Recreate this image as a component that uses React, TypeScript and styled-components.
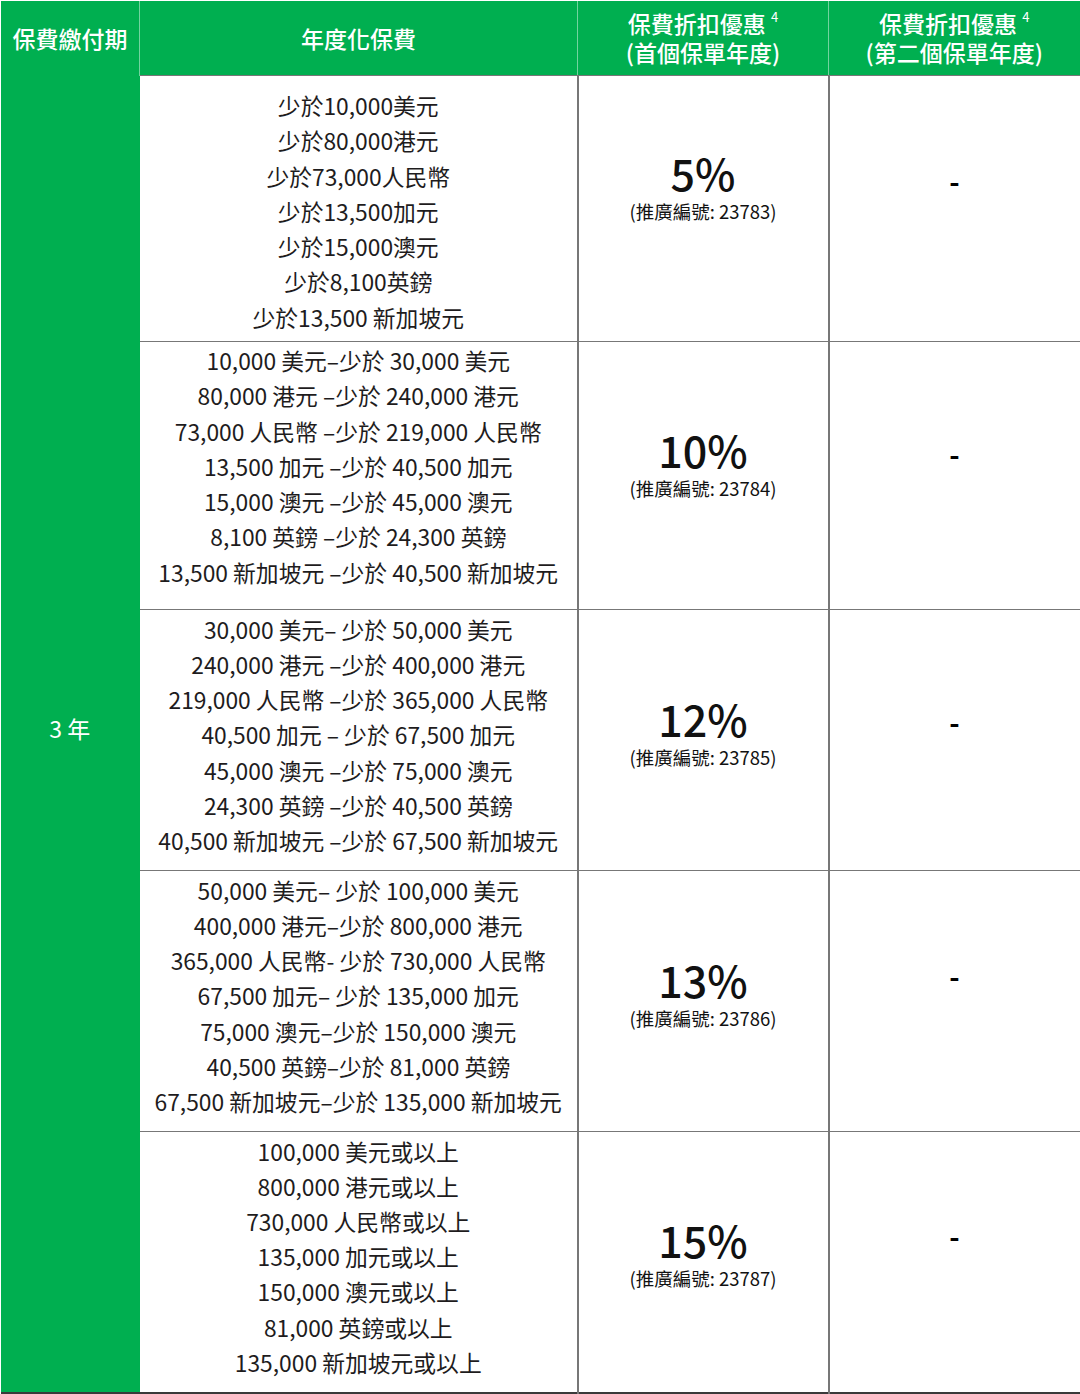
import styled, { createGlobalStyle } from "styled-components"

const GlobalStyle = createGlobalStyle`
  html, body {
    margin: 0;
    padding: 0;
    background: #ffffff;
  }
  body {
    font-family: "Noto Sans CJK TC", "Noto Sans", sans-serif;
    color: #1e1c1d;
  }
`

type Tier = {
  ranges: string[]
  discount: string
  code: string
  height: number
  // vertical nudges (px) to match the source's uneven cell alignment
  rangeShift: number
  discountShift: number
  dashShift: number
}

const tiers: Tier[] = [
  {
    ranges: [
      "少於10,000美元",
      "少於80,000港元",
      "少於73,000人民幣",
      "少於13,500加元",
      "少於15,000澳元",
      "少於8,100英鎊",
      "少於13,500 新加坡元",
    ],
    discount: "5%",
    code: "23783",
    height: 266,
    rangeShift: 3,
    discountShift: -23,
    dashShift: -28,
  },
  {
    ranges: [
      "10,000 美元–少於 30,000 美元",
      "80,000 港元 –少於 240,000 港元",
      "73,000 人民幣 –少於 219,000 人民幣",
      "13,500 加元 –少於 40,500 加元",
      "15,000 澳元 –少於 45,000 澳元",
      "8,100 英鎊 –少於 24,300 英鎊",
      "13,500 新加坡元 –少於 40,500 新加坡元",
    ],
    discount: "10%",
    code: "23784",
    height: 268,
    rangeShift: -9,
    discountShift: -13,
    dashShift: -22,
  },
  {
    ranges: [
      "30,000 美元– 少於 50,000 美元",
      "240,000 港元 –少於 400,000 港元",
      "219,000 人民幣 –少於 365,000 人民幣",
      "40,500 加元 – 少於 67,500 加元",
      "45,000 澳元 –少於 75,000 澳元",
      "24,300 英鎊 –少於 40,500 英鎊",
      "40,500 新加坡元 –少於 67,500 新加坡元",
    ],
    discount: "12%",
    code: "23785",
    height: 261,
    rangeShift: -5,
    discountShift: -9,
    dashShift: -18,
  },
  {
    ranges: [
      "50,000 美元– 少於 100,000 美元",
      "400,000 港元–少於 800,000 港元",
      "365,000 人民幣- 少於 730,000 人民幣",
      "67,500 加元– 少於 135,000 加元",
      "75,000 澳元–少於 150,000 澳元",
      "40,500 英鎊–少於 81,000 英鎊",
      "67,500 新加坡元–少於 135,000 新加坡元",
    ],
    discount: "13%",
    code: "23786",
    height: 261,
    rangeShift: -5,
    discountShift: -9,
    dashShift: -25,
  },
  {
    ranges: [
      "100,000 美元或以上",
      "800,000 港元或以上",
      "730,000 人民幣或以上",
      "135,000 加元或以上",
      "150,000 澳元或以上",
      "81,000 英鎊或以上",
      "135,000 新加坡元或以上",
    ],
    discount: "15%",
    code: "23787",
    height: 261,
    rangeShift: -5,
    discountShift: -9,
    dashShift: -26,
  },
]

export default function App() {
  return (
    <>
      <GlobalStyle />
      <Table>
        <colgroup>
          <col style={{ width: 139 }} />
          <col style={{ width: 438 }} />
          <col style={{ width: 251 }} />
          <col style={{ width: 252 }} />
        </colgroup>
        <thead>
          <HeadRow>
            <HeadCell>保費繳付期</HeadCell>
            <HeadCell>年度化保費</HeadCell>
            <HeadCell>
              保費折扣優惠 <Sup>4</Sup>
              <br />
              (首個保單年度)
            </HeadCell>
            <HeadCell>
              保費折扣優惠 <Sup>4</Sup>
              <br />
              (第二個保單年度)
            </HeadCell>
          </HeadRow>
        </thead>
        <tbody>
          {tiers.map((tier, i) => (
            <BodyRow key={tier.code} $height={tier.height}>
              {i === 0 && <TermCell rowSpan={tiers.length}>3 年</TermCell>}
              <RangeCell $shift={tier.rangeShift}>
                {tier.ranges.map((line) => (
                  <RangeLine key={line}>{line}</RangeLine>
                ))}
              </RangeCell>
              <DiscountCell $shift={tier.discountShift}>
                <Percent>{tier.discount}</Percent>
                <Code>(推廣編號: {tier.code})</Code>
              </DiscountCell>
              <DashCell $shift={tier.dashShift}>-</DashCell>
            </BodyRow>
          ))}
        </tbody>
      </Table>
    </>
  )
}

// a negative shift lifts the content, a positive one lowers it
const shiftPadding = (shift: number) =>
  shift < 0 ? `0 0 ${-shift * 2}px` : `${shift * 2}px 0 0`

const Table = styled.table`
  width: 1080px;
  border-collapse: collapse;
  table-layout: fixed;
  border-bottom: 2px solid #3a3a3a;
  border-right: 2px solid #3a3a3a;
`

const HeadRow = styled.tr`
  height: 75px;
  background: #00af50;
`

const HeadCell = styled.th`
  padding: 0;
  color: #ffffff;
  font-size: 23px;
  font-weight: 500;
  line-height: 29px;
  text-align: center;
  vertical-align: middle;
  border: 1px solid rgba(255, 255, 255, 0.45);
  border-bottom: none;
`

const Sup = styled.sup`
  font-size: 13px;
  font-weight: 400;
  line-height: 0;
  vertical-align: top;
  position: relative;
  top: 8px;
`

const BodyRow = styled.tr<{ $height: number }>`
  height: ${({ $height }) => $height}px;
`

const TermCell = styled.td`
  background: #00af50;
  color: #ffffff;
  font-size: 23px;
  text-align: center;
  vertical-align: middle;
  padding: 0 0 12px;
  border-right: 1px solid #00af50;
`

const RangeCell = styled.td<{ $shift: number }>`
  padding: ${({ $shift }) => shiftPadding($shift)};
  text-align: center;
  vertical-align: middle;
  border: 1px solid #777777;
  border-left: none;
`

const RangeLine = styled.div`
  font-size: 22.8px;
  line-height: 35.2px;
  white-space: nowrap;
`

const DiscountCell = styled.td<{ $shift: number }>`
  padding: ${({ $shift }) => shiftPadding($shift)};
  text-align: center;
  vertical-align: middle;
  border: 1px solid #777777;
  border-left: 2px solid #777777;
  color: #111111;
`

const Percent = styled.div`
  font-size: 43px;
  font-weight: 500;
  line-height: 50px;
`

const Code = styled.div`
  font-size: 18.5px;
  line-height: 26px;
  margin-top: 1px;
`

const DashCell = styled.td<{ $shift: number }>`
  padding: ${({ $shift }) => shiftPadding($shift)};
  font-size: 28px;
  font-weight: 700;
  color: #000000;
  text-align: center;
  vertical-align: middle;
  border: 1px solid #777777;
  border-left: 2px solid #777777;
`
